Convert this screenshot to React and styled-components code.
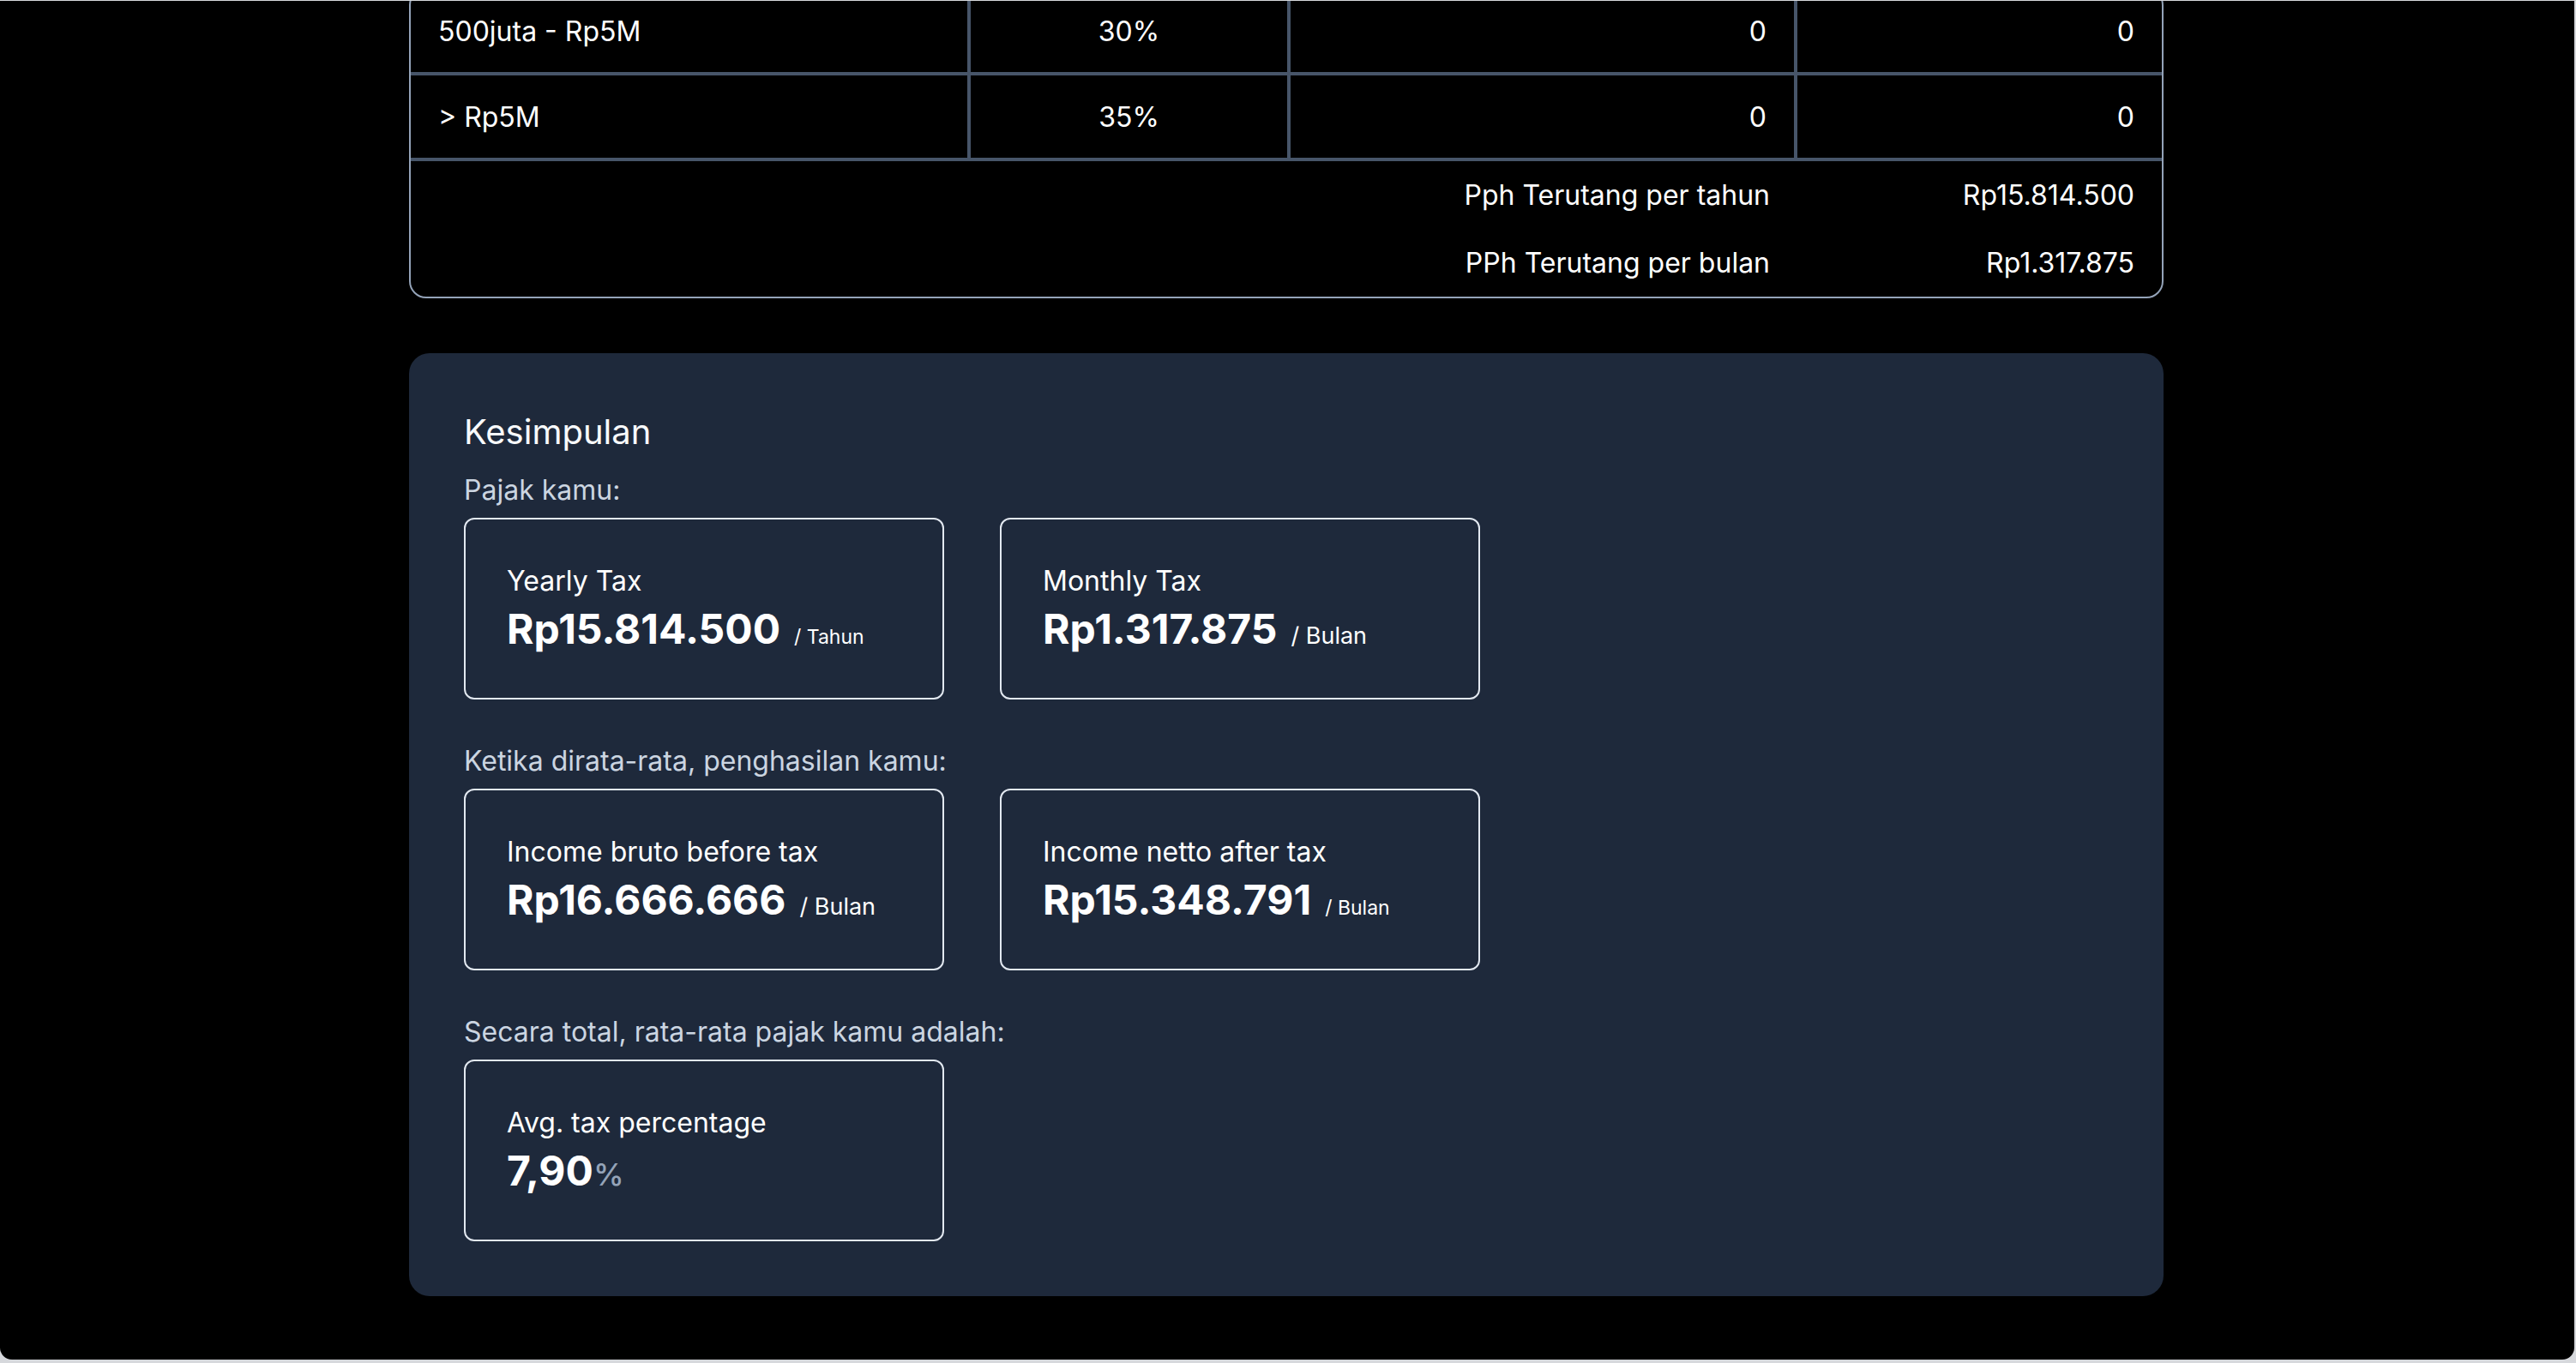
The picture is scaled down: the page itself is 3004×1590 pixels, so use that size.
import React from "react";
import styled, { createGlobalStyle } from "styled-components";

const GlobalStyle = createGlobalStyle`
  html {
    background: #d6d8dc;
  }
  body {
    margin: 1px 2px 4px 0;
    background: #000;
    color: #fff;
    font-family: Inter, "Noto Sans", sans-serif;
    border-radius: 0 0 14px 14px;
  }
`;

const Page = styled.div`
  height: calc(100vh - 5px);
  overflow: hidden;
`;

const Container = styled.div`
  width: 2046px;
  margin: -15px 0 0 477px;
`;

const TableCard = styled.div`
  border: 2px solid #94a3b8;
  border-radius: 20px;
  overflow: hidden;
`;

const Row = styled.div`
  display: grid;
  grid-template-columns: 653px 373px 591px 425px;
  height: ${({ $summary }) => ($summary ? "79px" : "100px")};
  border-bottom: ${({ $summary }) => ($summary ? "none" : "4px solid #475569")};
  box-sizing: border-box;
`;

const Cell = styled.div`
  display: flex;
  align-items: center;
  justify-content: ${({ $align }) =>
    $align === "center" ? "center" : $align === "right" ? "flex-end" : "flex-start"};
  padding: 0 32px;
  font-size: 32px;
  border-right: 4px solid #475569;

  &:last-child {
    border-right: none;
  }
`;

const SummaryLabel = styled.div`
  grid-column: 1 / 4;
  display: flex;
  align-items: center;
  justify-content: flex-end;
  padding: 0 32px;
  font-size: 32px;
`;

const SummaryValue = styled(SummaryLabel)`
  grid-column: 4 / 5;
`;

const Panel = styled.section`
  margin-top: 64px;
  padding: 64px;
  background: #1e293b;
  border-radius: 24px;
`;

const Heading = styled.h2`
  margin: 0 0 16px;
  font-size: 40px;
  line-height: 56px;
  font-weight: 400;
  color: #f8fafc;
`;

const Group = styled.div`
  & + & {
    margin-top: 48px;
  }
`;

const Label = styled.p`
  margin: 0 0 8px;
  font-size: 32px;
  line-height: 48px;
  color: #cbd5e1;
`;

const CardRow = styled.div`
  display: flex;
  gap: 65px;
`;

const Card = styled.div`
  width: 560px;
  box-sizing: border-box;
  padding: 48px;
  border: 2px solid #e2e8f0;
  border-radius: 12px;
`;

const CardTitle = styled.div`
  font-size: 32px;
  line-height: 48px;
`;

const Value = styled.div`
  display: flex;
  align-items: baseline;
  height: 64px;
  font-size: 48px;
  line-height: 64px;
  font-weight: 700;
`;

const Suffix = styled.span`
  margin-left: 16px;
  font-size: ${({ $size }) => $size}px;
  line-height: 1;
  font-weight: 400;
`;

const Percent = styled.span`
  font-size: 36px;
  line-height: 1;
  font-weight: 500;
  color: #94a3b8;
`;

const brackets = [
  { range: "500juta - Rp5M", rate: "30%", base: "0", tax: "0" },
  { range: "> Rp5M", rate: "35%", base: "0", tax: "0" },
];

const groups = [
  {
    label: "Pajak kamu:",
    cards: [
      { title: "Yearly Tax", value: "Rp15.814.500", suffix: "/ Tahun", size: 23 },
      { title: "Monthly Tax", value: "Rp1.317.875", suffix: "/ Bulan", size: 27 },
    ],
  },
  {
    label: "Ketika dirata-rata, penghasilan kamu:",
    cards: [
      { title: "Income bruto before tax", value: "Rp16.666.666", suffix: "/ Bulan", size: 27 },
      { title: "Income netto after tax", value: "Rp15.348.791", suffix: "/ Bulan", size: 23 },
    ],
  },
];

export default function App() {
  return (
    <>
      <GlobalStyle />
      <Page>
        <Container>
          <TableCard>
            {brackets.map((b) => (
              <Row key={b.range}>
                <Cell>{b.range}</Cell>
                <Cell $align="center">{b.rate}</Cell>
                <Cell $align="right">{b.base}</Cell>
                <Cell $align="right">{b.tax}</Cell>
              </Row>
            ))}
            <Row $summary>
              <SummaryLabel>Pph Terutang per tahun</SummaryLabel>
              <SummaryValue>Rp15.814.500</SummaryValue>
            </Row>
            <Row $summary>
              <SummaryLabel>PPh Terutang per bulan</SummaryLabel>
              <SummaryValue>Rp1.317.875</SummaryValue>
            </Row>
          </TableCard>

          <Panel>
            <Heading>Kesimpulan</Heading>
            {groups.map((g) => (
              <Group key={g.label}>
                <Label>{g.label}</Label>
                <CardRow>
                  {g.cards.map((c) => (
                    <Card key={c.title}>
                      <CardTitle>{c.title}</CardTitle>
                      <Value>
                        {c.value}
                        <Suffix $size={c.size}>{c.suffix}</Suffix>
                      </Value>
                    </Card>
                  ))}
                </CardRow>
              </Group>
            ))}
            <Group>
              <Label>Secara total, rata-rata pajak kamu adalah:</Label>
              <CardRow>
                <Card>
                  <CardTitle>Avg. tax percentage</CardTitle>
                  <Value>
                    7,90<Percent>%</Percent>
                  </Value>
                </Card>
              </CardRow>
            </Group>
          </Panel>
        </Container>
      </Page>
    </>
  );
}
